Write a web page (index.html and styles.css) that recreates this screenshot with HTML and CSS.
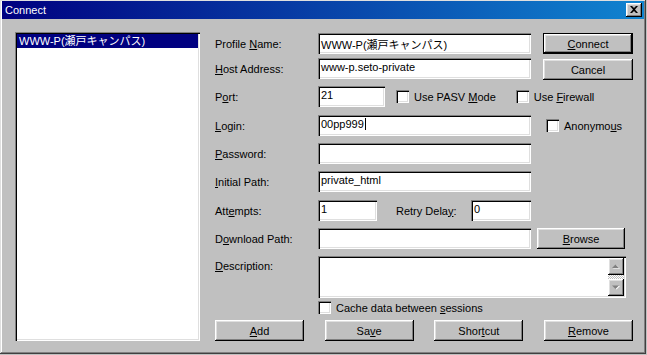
FILE: index.html
```html
<!DOCTYPE html>
<html>
    <head>
        <title> Connect </title>
        <link rel="stylesheet" href="styles.css">
    </head>
    <body>
        <div class="window">
            <div class="titlebar">
                <span class="title">Connect</span>
                <div class="closebutton">
                    <svg width="8" height="7" viewBox="0 0 8 7"><path d="M0 0h2l2 2 2-2h2L5 3.5 8 7H6L4 5 2 7H0l3-3.5z" fill="#000"/></svg>
                </div>
            </div>

            <div class="content">
                <div class="sitelist">
                    <div class="siteitem selected">WWW-P(瀬戸キャンパス)</div>
                </div>

                <div class="form">
                    <div class="row first">
                        <span class="label">Profile <u>N</u>ame:</span>
                        <div class="field wide">WWW-P(瀬戸キャンパス)</div>
                        <div class="button default side">
                            <span><u>C</u>onnect</span>
                        </div>
                    </div>

                    <div class="row second">
                        <span class="label"><u>H</u>ost Address:</span>
                        <div class="field wide">www-p.seto-private</div>
                        <div class="button side cancel"><span>Cancel</span></div>
                    </div>

                    <div class="row">
                        <span class="label">P<u>o</u>rt:</span>
                        <div class="field port">21</div>
                        <div class="check pasv"><span class="box"></span><span>Use PASV <u>M</u>ode</span></div>
                        <div class="check firewall"><span class="box"></span><span>Use <u>F</u>irewall</span></div>
                    </div>

                    <div class="row tall">
                        <span class="label"><u>L</u>ogin:</span>
                        <div class="field wide">00pp999<span class="caret"></span></div>
                        <div class="check anon"><span class="box"></span><span>Anonymo<u>u</u>s</span></div>
                    </div>

                    <div class="row">
                        <span class="label"><u>P</u>assword:</span>
                        <div class="field wide"></div>
                    </div>

                    <div class="row">
                        <span class="label"><u>I</u>nitial Path:</span>
                        <div class="field wide">private_html</div>
                    </div>

                    <div class="row tall">
                        <span class="label">Att<u>e</u>mpts:</span>
                        <div class="field attempts">1</div>
                        <span class="retrylabel">Retry Dela<u>y</u>:</span>
                        <div class="field retry">0</div>
                    </div>

                    <div class="row">
                        <span class="label">D<u>o</u>wnload Path:</span>
                        <div class="field wide"></div>
                        <div class="button browse"><span><u>B</u>rowse</span></div>
                    </div>

                    <div class="row description">
                        <span class="label"><u>D</u>escription:</span>
                        <div class="field memo">
                            <div class="memotext"></div>
                            <div class="scrollbar">
                                <div class="scrollbutton">
                                    <svg width="8" height="5" viewBox="0 0 8 5"><path d="M1 4.5L4.5 1 8 4.5z" fill="#fff"/><path d="M0 4L3.5 0.5 7 4z" fill="#808080"/></svg>
                                </div>
                                <div class="track"></div>
                                <div class="scrollbutton">
                                    <svg width="8" height="5" viewBox="0 0 8 5"><path d="M1 1L4.5 4.5 8 1z" fill="#fff"/><path d="M0 0.5L3.5 4 7 0.5z" fill="#808080"/></svg>
                                </div>
                            </div>
                        </div>
                    </div>

                    <div class="row cache">
                        <div class="check"><span class="box"></span><span>Cache data between <u>s</u>essions</span></div>
                    </div>

                    <div class="row buttons">
                        <div class="button"><span><u>A</u>dd</span></div>
                        <div class="button"><span>Sa<u>v</u>e</span></div>
                        <div class="button"><span>Shor<u>t</u>cut</span></div>
                        <div class="button"><span><u>R</u>emove</span></div>
                    </div>
                </div>
            </div>
        </div>
    </body>
</html>
```

FILE: styles.css
```css
body{
    margin:0;
    background-color:#c0c0c0;
    font-family:"Liberation Sans", "Noto Sans CJK JP", sans-serif;
    font-size:11px;
    color:black;
}

.window{
    width:646px;
    height:354px;
    box-sizing:border-box;
    padding:2px;
    background-color:#c0c0c0;
    box-shadow:inset -1px -1px #404040, inset 1px 1px #dfdfdf, inset -2px -2px #808080, inset 2px 2px #fff;
}

.titlebar{
    height:18px;
    margin-top:-1px;
    display:flex;
    align-items:center;
    justify-content:space-between;
    background:linear-gradient(to right, #000080, #1084d0);
    padding:0 2px 0 3px;
}

.title{
    color:white;
    font-size:11px;
}

.closebutton{
    width:16px;
    height:14px;
    box-sizing:border-box;
    background-color:#c0c0c0;
    box-shadow:inset -1px -1px #000, inset 1px 1px #fff, inset -2px -2px #808080, inset 2px 2px #dfdfdf;
    display:flex;
    align-items:center;
    justify-content:center;
    padding:0 1px 1px 0;
}

.content{
    display:flex;
    padding:13px 0 0 13px;
}

.sitelist{
    width:185px;
    height:309px;
    box-sizing:border-box;
    background-color:white;
    padding:2px;
    box-shadow:inset 1px 1px #808080, inset 2px 2px #000, inset -1px -1px #fff, inset -2px -2px #dfdfdf;
}

.siteitem{
    height:14px;
    line-height:14px;
    padding-left:2px;
    white-space:nowrap;
}

.selected{
    background-color:#000080;
    color:white;
}

.form{
    margin-left:15px;
    padding-top:1px;
    width:418px;
}

.row{
    display:flex;
    align-items:center;
    height:21px;
    margin-top:7px;
}

.row.first{
    margin-top:0;
}

.row.second{
    margin-top:4px;
}

.row.tall{
    margin-top:8px;
}

.label{
    width:103px;
    flex:none;
}

.field{
    height:21px;
    box-sizing:border-box;
    background-color:white;
    padding:3px 2px 0 3px;
    white-space:nowrap;
    box-shadow:inset 1px 1px #808080, inset 2px 2px #000, inset -1px -1px #fff, inset -2px -2px #dfdfdf;
}

.wide{
    width:213px;
}

.port{
    width:67px;
}

.attempts{
    width:59px;
}

.retry{
    width:60px;
}

.retrylabel{
    margin-left:19px;
    width:75px;
}

.caret{
    display:inline-block;
    width:1px;
    height:12px;
    background-color:black;
    vertical-align:-2px;
    margin-left:1px;
}

.button{
    width:89px;
    height:21px;
    box-sizing:border-box;
    display:flex;
    align-items:center;
    justify-content:center;
    background-color:#c0c0c0;
    box-shadow:inset -1px -1px #000, inset 1px 1px #fff, inset -2px -2px #808080, inset 2px 2px #dfdfdf;
}

.button.side{
    margin-left:12px;
    width:90px;
}

.button.cancel{
    margin-top:2px;
}

.button.default{
    border:1px solid black;
}

.button.browse{
    margin-left:6px;
    width:88px;
}

.check{
    display:flex;
    align-items:center;
    white-space:nowrap;
}

.box{
    width:13px;
    height:13px;
    box-sizing:border-box;
    background-color:white;
    margin-right:5px;
    flex:none;
    box-shadow:inset 1px 1px #808080, inset 2px 2px #000, inset -1px -1px #fff, inset -2px -2px #dfdfdf;
}

.pasv{
    margin-left:11px;
}

.firewall{
    margin-left:20px;
}

.anon{
    margin-left:15px;
}

.row.description{
    height:42px;
    align-items:flex-start;
}

.row.description .label{
    padding-top:4px;
}

.memo{
    width:308px;
    height:42px;
    display:flex;
    padding:2px;
}

.memotext{
    flex:1;
}

.scrollbar{
    width:16px;
    display:flex;
    flex-direction:column;
}

.scrollbutton{
    height:17px;
    box-sizing:border-box;
    background-color:#c0c0c0;
    display:flex;
    align-items:center;
    justify-content:center;
    box-shadow:inset -1px -1px #000, inset 1px 1px #fff, inset -2px -2px #808080, inset 2px 2px #dfdfdf;
}

.track{
    flex:1;
    background-image:repeating-conic-gradient(#c0c0c0 0 25%, #fff 0 50%);
    background-size:2px 2px;
}

.row.cache{
    height:13px;
    margin-top:3px;
    padding-left:103px;
}

.row.buttons{
    margin-top:6px;
    justify-content:space-between;
}
```
